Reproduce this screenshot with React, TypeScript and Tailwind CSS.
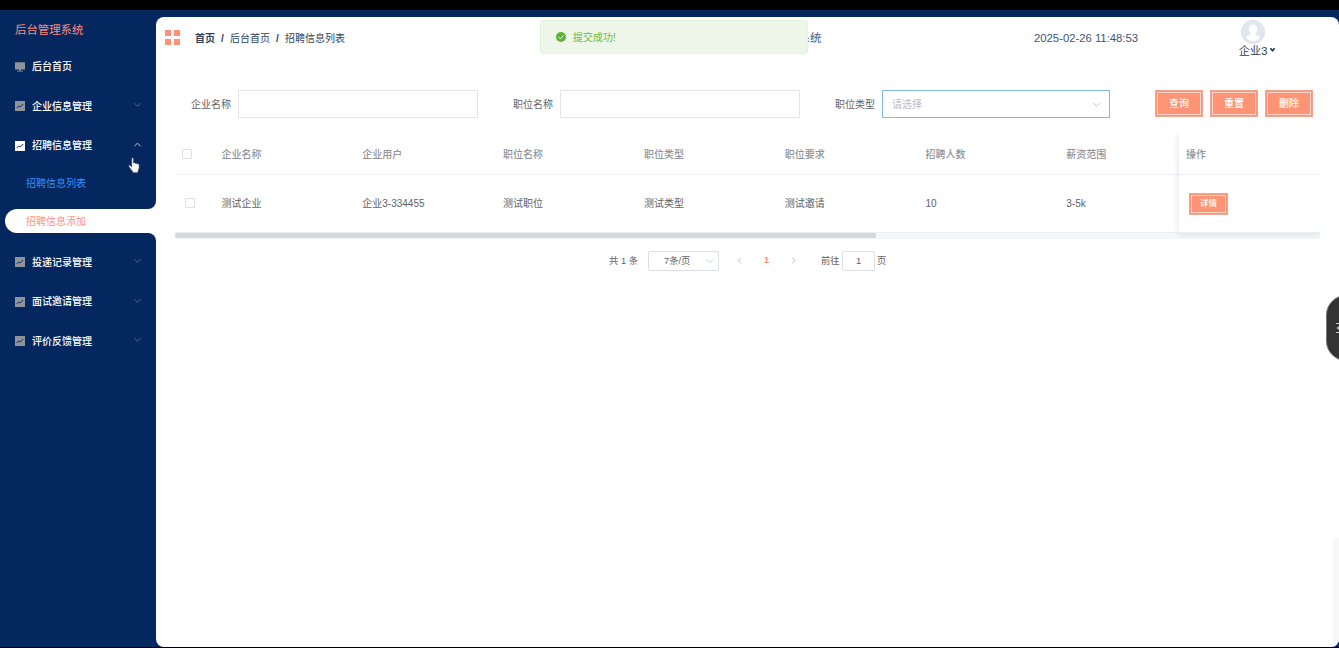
import React from 'react';

const columns = [
  { label: '企业名称', value: '测试企业' },
  { label: '企业用户', value: '企业3-334455' },
  { label: '职位名称', value: '测试职位' },
  { label: '职位类型', value: '测试类型' },
  { label: '职位要求', value: '测试邀请' },
  { label: '招聘人数', value: '10' },
  { label: '薪资范围', value: '3-5k' },
];

function Chevron({ className, d = 'M1 3l4 4 4-4' }: { className: string; d?: string }) {
  return (
    <svg viewBox="0 0 10 10" fill="none" stroke="currentColor" strokeWidth="1" className={className}>
      <path d={d} />
    </svg>
  );
}

function ChartIcon({ active }: { active?: boolean }) {
  return (
    <svg viewBox="0 0 10 10" className={active ? 'h-[10px] w-[10px] text-white' : 'h-[10px] w-[10px] text-[#909399]'}>
      <rect width="10" height="10" fill="currentColor" />
      <path d="M1.7 7l2-2 1.5 1 2.9-3" fill="none" stroke="#04275f" strokeWidth="0.9" />
    </svg>
  );
}

function MenuRow({ label, open, height }: { label: string; open?: boolean; height: string }) {
  return (
    <div className={`flex items-center pl-[15px] pr-[14px] ${height}`}>
      <ChartIcon active={open} />
      <span className="ml-[7px] flex-1 pt-px text-[10px] font-medium text-white">{label}</span>
      {open ? (
        <Chevron className="mb-[2px] h-[9px] w-[9px] text-[#d5dae3]" d="M1.500 7L5 3.500 8.500 7" />
      ) : (
        <Chevron className="mb-[3px] h-[9px] w-[9px] text-[#5b6f91]" d="M1.500 3.500L5 7l3.500-3.500" />
      )}
    </div>
  );
}

function Sidebar() {
  return (
    <aside className="flex w-[156px] shrink-0 flex-col bg-white">
      <div className="h-[199px] rounded-br-[8px] bg-[#04275f]">
        <div className="flex h-[37px] items-center pl-[15px] pt-[5px] text-[11.4px] text-[#fb8b80]">后台管理系统</div>
        <div className="flex h-[39px] items-center pl-[15px]">
          <svg viewBox="0 0 10 10" className="h-[10px] w-[10px] fill-[#909399]">
            <path d="M0 .3h10v7.2H0zM4.3 7.5h1.4v1.3H8v.8H2v-.8h2.3z" />
          </svg>
          <span className="ml-[7px] pt-px text-[10px] font-medium text-white">后台首页</span>
        </div>
        <MenuRow label="企业信息管理" height="h-[40px]" />
        <MenuRow label="招聘信息管理" open height="h-[39px]" />
        <div className="flex h-[36px] items-center pl-[26px] pt-[2px] text-[10px] text-[#3b8ff5]">招聘信息列表</div>
      </div>
      <div className="bg-[#04275f] pl-[5px]">
        <div className="flex h-[24px] items-center rounded-l-full bg-white pl-[21px] pt-[2px] text-[10px] text-[#fa9382]">招聘信息添加</div>
      </div>
      <div className="flex-1 rounded-tr-[8px] bg-[#04275f] pt-[9px]">
        <MenuRow label="投递记录管理" height="h-[40px]" />
        <MenuRow label="面试邀请管理" height="h-[39px]" />
        <MenuRow label="评价反馈管理" height="h-[40px]" />
      </div>
    </aside>
  );
}

function Header() {
  return (
    <header className="flex h-[43px] items-center">
      <div className="mb-[2px] ml-[9px] grid grid-cols-2 gap-[3px]">
        <i className="h-[6px] w-[6px] bg-[#ff8f75]" />
        <i className="h-[6px] w-[6px] bg-[#ff8f75]" />
        <i className="h-[6px] w-[6px] bg-[#ff8f75]" />
        <i className="h-[6px] w-[6px] bg-[#ff8f75]" />
      </div>
      <div className="ml-[15px] flex w-[470px] whitespace-pre text-[10px] text-[#304156]">
        <b className="font-bold">首页</b>
        <span className="w-[15px] text-center font-bold">/</span>
        <span>后台首页</span>
        <span className="w-[15px] text-center font-bold">/</span>
        <span>招聘信息列表</span>
      </div>
      <div className="ml-[88px] w-[68px] whitespace-nowrap text-right text-[11.4px] text-[#42587a]">后台管理系统</div>
      <time className="ml-[213px] whitespace-nowrap text-[11.3px] text-[#3d5673]">2025-02-26 11:48:53</time>
      <div className="ml-[100px] flex w-[38px] flex-col items-center">
        <svg viewBox="0 0 24 24" className="mb-px ml-[-8px] h-[24px] w-[24px]">
          <circle cx="12" cy="12" r="11.5" fill="#e1e6f1" stroke="#dcdfe6" strokeWidth="1" />
          <path d="M12 4.500c2.700 0 4.200 1.900 4.200 4.600 0 1.700-.7 3.200-1.700 4.200v1.400c1.500.9 3.900 1.200 4.700 2.800-1.700 2.300-4.300 3.600-7.200 3.600s-5.500-1.300-7.200-3.600c.8-1.600 3.200-1.900 4.700-2.800v-1.400c-1-1-1.700-2.500-1.700-4.200 0-2.700 1.500-4.600 4.200-4.600z" fill="#fff" />
        </svg>
        <div className="flex h-[13px] items-center whitespace-nowrap text-[11.2px] leading-[13px] text-[#304156]">
          企业3
          <svg viewBox="0 0 6 5" className="mb-[2px] ml-[3px] h-[4px] w-[5px] fill-[#304156]">
            <path d="M0 0h1.500L3 1.500 4.500 0H6v1.500L3 5 0 1.500z" />
          </svg>
        </div>
      </div>
    </header>
  );
}

function ActionButton({ label }: { label: string }) {
  return (
    <button className="h-[27px] w-[48px] border border-[#f2a48e] bg-[#ff9375] p-px">
      <span className="flex h-full items-center justify-center border border-[#ffd5c9] pt-px text-[10px] font-medium text-white">{label}</span>
    </button>
  );
}

function SearchBar() {
  return (
    <div className="mt-[30px] flex h-[28px] items-center pl-[35px] text-[10px] text-[#606266]">
      <label className="w-[47px] pt-[2px]">企业名称</label>
      <input className="h-[28px] w-[240px] border border-[#e3e5ea] outline-none" />
      <label className="ml-[35px] w-[47px] pt-[2px]">职位名称</label>
      <input className="h-[28px] w-[240px] border border-[#e3e5ea] outline-none" />
      <label className="ml-[35px] w-[47px] pt-[2px]">职位类型</label>
      <div className="flex h-[28px] w-[228px] items-center border border-[#7fb9e3] pl-[9px] pr-[8px] text-[#b8bcc6]">
        <span className="flex-1 pt-[2px]">请选择</span>
        <Chevron className="h-[9px] w-[9px]" />
      </div>
      <div className="-mt-px ml-[45px] flex gap-[7px]">
        <ActionButton label="查询" />
        <ActionButton label="重置" />
        <ActionButton label="删除" />
      </div>
    </div>
  );
}

function DataTable() {
  return (
    <section className="ml-[19px] mt-[16px] w-[1145px] overflow-hidden text-[10px]">
      <div className="flex">
        <div className="w-[1004px]">
          <div className="flex h-[41px] items-center border-b border-[#ebeef5] font-medium text-[#909399]">
            <span className="ml-[7px] mr-[29.500px] h-[10px] w-[10px] shrink-0 rounded-[1px] border border-[#dcdfe6]" />
            {columns.map((c) => (
              <span key={c.label} className="w-[140.800px] shrink-0 pt-[2px]">{c.label}</span>
            ))}
          </div>
          <div className="flex h-[58px] items-center border-b border-[#ebeef5] text-[#606266]">
            <span className="mb-px ml-[10px] mr-[26.500px] h-[10px] w-[10px] shrink-0 rounded-[1px] border border-[#dcdfe6]" />
            {columns.map((c) => (
              <span key={c.label} className="w-[140.800px] shrink-0">{c.value}</span>
            ))}
          </div>
        </div>
        <div className="z-10 w-[141px] bg-white shadow-[0_0_8px_rgba(0,0,0,0.12)]">
          <div className="flex h-[41px] items-center border-b border-[#ebeef5] pl-[7px] pt-[2px] font-medium text-[#909399]">操作</div>
          <div className="flex h-[58px] items-center border-b border-[#ebeef5] pl-[10px]">
            <button className="h-[22px] w-[39px] border border-[#f2a48e] bg-[#ff9375] p-px">
              <span className="flex h-full items-center justify-center border border-[#ffd5c9] pt-px text-[8.500px] font-medium text-white">详情</span>
            </button>
          </div>
        </div>
      </div>
      <div className="h-[6px] bg-[#f5f6f8]">
        <div className="h-[5px] w-[701px] rounded-[2px] bg-[#d6d7da]" />
      </div>
    </section>
  );
}

function Pagination() {
  return (
    <div className="mt-[12px] flex h-[20px] items-center whitespace-pre pl-[453px] text-[9.300px] text-[#606266]">
      <span className="w-[39px] pt-px">共 1 条</span>
      <div className="flex h-[20px] w-[71px] items-center rounded-[2px] border border-[#dcdfe6] pl-[15px] pr-[4px]">
        <span className="flex-1 pt-px">7条/页</span>
        <Chevron className="h-[8px] w-[8px] text-[#c0c4cc]" />
      </div>
      <Chevron className="mb-px ml-[16px] h-[9px] w-[9px] text-[#b0b4bc]" d="M6.500 2L3.500 5l3 3" />
      <span className="w-[45px] text-center font-bold text-[#fa8f77]">1</span>
      <Chevron className="mb-px h-[9px] w-[9px] text-[#b0b4bc]" d="M3.500 2l3 3-3 3" />
      <span className="ml-[23px] w-[21px] pt-[2px]">前往</span>
      <span className="flex h-[20px] w-[33px] items-center justify-center rounded-[2px] border border-[#dcdfe6] pt-px">1</span>
      <span className="ml-[2px] pt-[2px]">页</span>
    </div>
  );
}

export default function App() {
  return (
    <div className="relative flex h-[648px] w-[1339px] flex-col overflow-hidden border-b border-t-[10px] border-[#000] bg-[#04275f] font-['Liberation_Sans','Noto_Sans_CJK_SC',sans-serif] leading-[1.4]">
      <div className="flex min-h-0 flex-1">
        <Sidebar />
        <div className="flex flex-1 bg-[#04275f] pt-[7px]">
          <main className="flex flex-1 flex-col overflow-hidden rounded-[8px] bg-white">
            <Header />
            <SearchBar />
            <DataTable />
            <Pagination />
            <div className="flex flex-1 items-end justify-end">
              <div className="h-[109px] w-[6px] bg-[#f8f8f9]" />
            </div>
          </main>
        </div>
      </div>

      <div className="absolute left-[540px] top-[10px] z-20 flex h-[34px] w-[268px] items-center rounded-[3px] border border-[#e4f3dc] bg-[#edf6e8] pl-[15px] text-[10px] text-[#6dbb47]">
        <svg viewBox="0 0 10 10" className="mr-[7px] h-[10px] w-[10px]">
          <circle cx="5" cy="5" r="5" fill="#5fb336" />
          <path d="M2.700 5.100l1.700 1.600 2.900-3" fill="none" stroke="#fff" strokeWidth="1" />
        </svg>
        <span className="pt-[2px]">提交成功!</span>
      </div>

      <div className="absolute left-[1326px] top-[285px] h-[66px] w-[40px] rounded-[24px] border border-[#777] bg-[#333]">
        <svg viewBox="0 0 10 10" className="ml-[8px] mt-[27px] h-[10px] w-[10px]" fill="none" stroke="#c5c5c5" strokeWidth="1">
          <path d="M1 .5h9M4 5h6M1 9.500h9" />
          <path d="M4 3v4L1.500 5z" fill="#c5c5c5" stroke="none" />
        </svg>
      </div>

      <svg viewBox="0 0 14 18" className="absolute left-[128px] top-[147px] h-[17px] w-[13px]">
        <path
          d="M4 1.700c0-1.400 2-1.400 2 0v4.600c.7-.6 1.700-.3 2 .4.800-.5 1.700-.2 2 .6 1-.4 2 .1 2 1.200v3c0 1.700-1 2.500-1.200 3.800v1.500H5v-1.300C3.500 14 2.300 12 1 10.300c-.8-1.300.5-2.200 1.500-1.200L4 10.500z"
          fill="#fff"
          stroke="#26304a"
          strokeWidth=".7"
        />
      </svg>
    </div>
  );
}
